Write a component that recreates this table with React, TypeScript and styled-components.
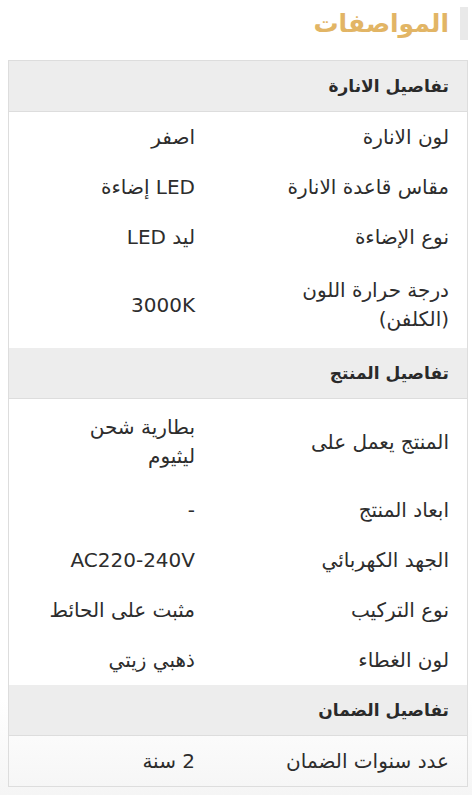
import React from 'react'
import styled, { createGlobalStyle } from 'styled-components'

const GlobalStyle = createGlobalStyle`
  body {
    margin: 0;
    min-height: 795px;
    background: linear-gradient(180deg, #ffffff 0%, #ffffff 88%, #f5f5f5 100%);
    font-family: "DejaVu Sans", "Noto Sans", sans-serif;
    color: #2d2d2d;
  }
`

const Page = styled.div`
  direction: rtl;
  padding: 7px 4px 0 8px;
`

const Title = styled.h2`
  margin: 0 0 20px;
  padding-right: 11px;
  border-right: 8px solid #e9e9e9;
  font-size: 25px;
  line-height: 33px;
  font-weight: 700;
  color: #e2b565;
`

const Table = styled.div`
  border: 1px solid #dddddd;
`

const SectionHead = styled.div`
  background: #ededed;
  border-bottom: 1px solid #dddddd;
  padding: 11px 18px;
  font-size: 17px;
  line-height: 28px;
  font-weight: 700;
  color: #2a2a2a;
`

const Row = styled.div<{ $tall?: boolean }>`
  display: grid;
  grid-template-columns: 254px 1fr;
  align-items: center;
  font-size: 20px;
  line-height: ${p => (p.$tall ? '29px' : '28px')};
  padding: ${p => (p.$tall ? '14px 0' : '11px 0')};
`

const Label = styled.div`
  padding: 0 18px 0 46px;
`

const Value = styled.div`
  padding: 0 18px 0 38px;
`

type Spec = { label: string; value: string; tall?: boolean }

const sections: { title: string; rows: Spec[] }[] = [
  {
    title: 'تفاصيل الانارة',
    rows: [
      { label: 'لون الانارة', value: 'اصفر' },
      { label: 'مقاس قاعدة الانارة', value: 'LED إضاءة' },
      { label: 'نوع الإضاءة', value: 'ليد LED' },
      { label: 'درجة حرارة اللون (الكلفن)', value: '3000K', tall: true },
    ],
  },
  {
    title: 'تفاصيل المنتج',
    rows: [
      { label: 'المنتج يعمل على', value: 'بطارية شحن ليثيوم', tall: true },
      { label: 'ابعاد المنتج', value: '-' },
      { label: 'الجهد الكهربائي', value: 'AC220-240V' },
      { label: 'نوع التركيب', value: 'مثبت على الحائط' },
      { label: 'لون الغطاء', value: 'ذهبي زيتي' },
    ],
  },
  {
    title: 'تفاصيل الضمان',
    rows: [{ label: 'عدد سنوات الضمان', value: '2 سنة' }],
  },
]

export default function App() {
  return (
    <>
      <GlobalStyle />
      <Page>
        <Title>المواصفات</Title>
        <Table>
          {sections.map(s => (
            <React.Fragment key={s.title}>
              <SectionHead>{s.title}</SectionHead>
              {s.rows.map(r => (
                <Row key={r.label} $tall={r.tall}>
                  <Label>{r.label}</Label>
                  <Value>{r.value}</Value>
                </Row>
              ))}
            </React.Fragment>
          ))}
        </Table>
      </Page>
    </>
  )
}
